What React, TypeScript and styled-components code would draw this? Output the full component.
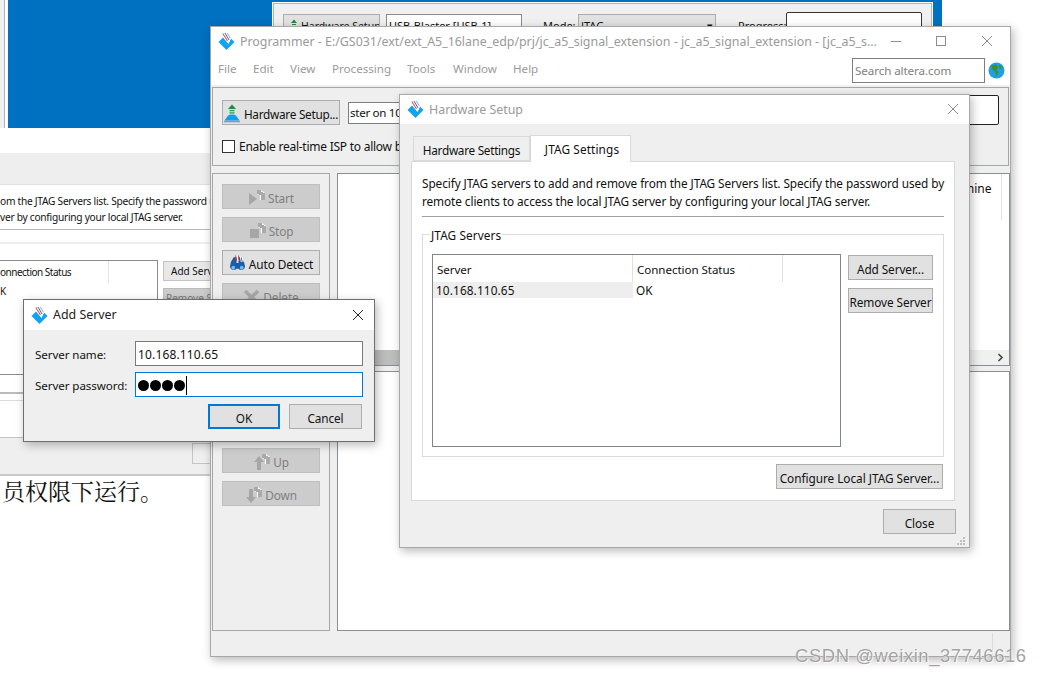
import React from "react";
import styled, { createGlobalStyle } from "styled-components";

const Global = createGlobalStyle`
  html, body { margin: 0; padding: 0; background: #fff; }
  * { box-sizing: border-box; }
  body { font-family: "Noto Sans", "Open Sans", sans-serif; font-size: 12px; color: #111; }
`;

const Desktop = styled.div`
  position: relative;
  width: 1041px;
  height: 675px;
  overflow: hidden;
  background: #fff;
`;

/* desktop canvas: every window sits at its own place */
const BlueWall = styled.div`
  position: absolute;
  left: 8px;
  top: 0;
  width: 934px;
  height: 128px;
  background: #0070c0;
`;
const LeftStrip = styled.div`
  position: absolute;
  left: 0;
  top: 0;
  width: 8px;
  height: 128px;
  background: #f0f0f0;
  border-right: 3px solid #fff;
  &::after {
    content: "";
    position: absolute;
    left: 4px;
    top: 0;
    width: 1px;
    height: 128px;
    background: #b0b0b0;
  }
`;
const BackWindow = styled.div`
  position: absolute;
  left: 273px;
  top: 3px;
  width: 659px;
  height: 60px;
  background: #f0f0f0;
  border: 1px solid #b4b4b4;
  display: flex;
  align-items: flex-start;
  padding: 10px 9px;
  gap: 6px;
  outline: 1px solid #fff;
`;
const BackButton = styled.div`
  width: 97px;
  height: 26px;
  background: #e1e1e1;
  border: 1px solid #adadad;
  display: flex;
  padding: 4px 0 0 3px;
  font-size: 10.5px;
  white-space: nowrap;
  overflow: hidden;
`;
const BackField = styled.div<{ $w: number; $ml?: number }>`
  width: ${(p) => p.$w}px;
  margin-left: ${(p) => p.$ml ?? 0}px;
  height: 26px;
  background: #fff;
  border: 1px solid #8a8a8a;
  font-size: 11px;
  padding: 3px 2px;
  white-space: nowrap;
  display: flex;
  justify-content: space-between;
`;
const BackLabel = styled.div<{ $w: number; $ml: number }>`
  width: ${(p) => p.$w}px;
  margin-left: ${(p) => p.$ml}px;
  font-size: 11px;
  padding-top: 4px;
  white-space: nowrap;
`;
const BackSelect = styled(BackField)`
  background: #e1e1e1;
  border-color: #adadad;
`;
const BackBox = styled.div`
  width: 136px;
  height: 30px;
  margin-top: -2px;
  background: #fff;
  border: 1px solid #333;
  border-radius: 2px;
`;

const StaleWindow = styled.div`
  position: absolute;
  left: 0;
  top: 128px;
  width: 212px;
  height: 547px;
  display: flex;
  flex-direction: column;
  background: #fff;
`;
const StaleTitle = styled.div`
  height: 25px;
  flex: none;
  background: #fff;
`;
const StaleBand = styled.div`
  height: 31px;
  flex: none;
  background: #eeeeee;
`;
const StaleTop = styled.div`
  height: 46px;
  flex: none;
  padding-top: 8px;
  background: #fff;
  overflow: hidden;
  white-space: nowrap;
  line-height: 16px;
  font-size: 10.2px;
  letter-spacing: -0.27px;
  border-top: 1px solid #e0e0e0;
  border-bottom: 1px solid #b8b8b8;
`;
const StaleGap = styled.div`
  height: 14px;
  flex: none;
  background: #fff;
  border-bottom: 2px solid #eee;
`;
const StaleList = styled.div`
  flex: none;
  height: 148px;
  display: flex;
  gap: 5px;
  padding-top: 16px;
  background: #fff;
`;
const StaleTable = styled.div`
  width: 158px;
  height: 115px;
  flex: none;
  background: #fff;
  border: 1px solid #8a8a8a;
  border-left: 0;
  display: grid;
  grid-template-columns: 109px 1fr;
  grid-template-rows: 22px 16px;
  font-size: 10px;
  letter-spacing: -0.5px;
  line-height: 16px;
`;
const StaleHead = styled.div`
  border-right: 1px solid #e3e3e3;
  line-height: 23px;
  white-space: nowrap;
`;
const StaleButtons = styled.div`
  display: flex;
  flex-direction: column;
  gap: 7px;
  margin-top: 1px;
`;
const StaleButton = styled.div<{ $off?: boolean }>`
  width: 60px;
  height: 20px;
  overflow: hidden;
  white-space: nowrap;
  padding-left: ${(p) => (p.$off ? 2 : 7)}px;
  font-size: 10px;
  line-height: 18px;
  background: ${(p) => (p.$off ? "#ccc" : "#e8e8e8")};
  border: 1px solid ${(p) => (p.$off ? "#bbb" : "#c4c4c4")};
  color: ${(p) => (p.$off ? "#777" : "#111")};
`;
const StaleLines = styled.div`
  flex: none;
  height: 46px;
  background: #fff;
  border-top: 2px solid #bbb;
  border-bottom: 1px solid #c4c4c4;
  &::before {
    content: "";
    display: block;
    height: 6px;
    border-bottom: 1px solid #ddd;
  }
`;
const StaleFoot = styled.div`
  flex: none;
  height: 38px;
  background: #efefef;
  border-bottom: 2px solid #c8c8c8;
  display: flex;
  justify-content: flex-end;
  padding-top: 5px;
`;
const StaleFootBtn = styled.div`
  width: 20px;
  height: 21px;
  background: #efefef;
  border: 1px solid #c4c4c4;
`;
const Chinese = styled.div`
  font-family: "Noto Serif CJK SC", "Noto Sans CJK SC", serif;
  font-size: 23px;
  line-height: 30px;
  padding-left: 2px;
  color: #111;
  white-space: nowrap;
`;

const Win = styled.div<{ $x: number; $y: number; $w: number; $h: number; $active?: boolean }>`
  position: absolute;
  left: ${(p) => p.$x}px;
  top: ${(p) => p.$y}px;
  width: ${(p) => p.$w}px;
  height: ${(p) => p.$h}px;
  display: flex;
  flex-direction: column;
  background: #efefef;
  border: 1px solid ${(p) => (p.$active ? "#6e6e6e" : "#a8a8a8")};
  box-shadow: 2px 3px 9px rgba(0, 0, 0, 0.28);
`;
const TitleBar = styled.div<{ $h: number; $active?: boolean }>`
  height: ${(p) => p.$h}px;
  flex: none;
  background: #fff;
  display: flex;
  align-items: center;
  gap: 5px;
  padding: 0 0 1px 7px;
  font-size: 12.4px;
  color: ${(p) => (p.$active ? "#222" : "#9a9a9a")};
  white-space: nowrap;
`;
const TitleText = styled.span`
  flex: 1;
  min-width: 0;
`;
const CaptionBtn = styled.svg<{ $mr: number }>`
  width: 12px;
  height: 12px;
  margin-right: ${(p) => p.$mr}px;
  flex: none;
`;

const MenuBar = styled.div`
  height: 29px;
  flex: none;
  background: #fff;
  display: flex;
  align-items: center;
  padding-left: 7px;
`;
const MenuItem = styled.span<{ $w: number }>`
  width: ${(p) => p.$w}px;
  padding-bottom: 5px;
  font-size: 11.6px;
  color: #9a9a9a;
`;
const SearchField = styled.div`
  margin-left: auto;
  width: 133px;
  height: 25px;
  background: #fff;
  border: 1px solid #7e7e7e;
  color: #808080;
  font-size: 11.6px;
  line-height: 23px;
  padding-left: 2px;
  letter-spacing: -0.08px;
`;
const Globe = styled.svg`
  width: 17px;
  height: 17px;
  margin: 0 5px 0 3px;
`;

const Panel = styled.div`
  border: 1px solid #a6a6a6;
  background: #efefef;
`;
const ToolPanel = styled(Panel)`
  margin: 2px 1px 0 1px;
  height: 79px;
  padding: 12px 9px 0 9px;
  flex: none;
`;
const ToolRow = styled.div`
  display: flex;
  align-items: center;
  height: 25px;
`;
const CheckRow = styled.div`
  display: flex;
  align-items: center;
  gap: 4px;
  margin-top: 11px;
  height: 20px;
  font-size: 12px;
  letter-spacing: -0.25px;
  white-space: nowrap;
`;
const CheckBox = styled.span`
  width: 13px;
  height: 13px;
  flex: none;
  border: 1px solid #333;
  background: #fff;
`;
const Btn = styled.button<{ $w?: number; $off?: boolean; $primary?: boolean; $ls?: number }>`
  width: ${(p) => (p.$w ? `${p.$w}px` : "auto")};
  height: 25px;
  flex: none;
  padding: 2px 0 0 0;
  display: flex;
  align-items: center;
  justify-content: center;
  gap: 3px;
  font-family: inherit;
  font-size: 11.8px;
  letter-spacing: ${(p) => p.$ls ?? -0.1}px;
  white-space: nowrap;
  background: ${(p) => (p.$off ? "#cccccc" : "#e1e1e1")};
  border: ${(p) => (p.$primary ? "2px solid #0078d7" : p.$off ? "1px solid #bfbfbf" : "1px solid #adadad")};
  color: ${(p) => (p.$off ? "#808080" : "#111")};
`;
const DeviceField = styled.div`
  margin-left: 8px;
  height: 22px;
  width: 100px;
  padding-left: 1px;
  background: #fff;
  border: 1px solid #7e7e7e;
  font-size: 11.6px;
  letter-spacing: -0.3px;
  line-height: 20px;
  white-space: nowrap;
  overflow: hidden;
`;
const ProgressBox = styled.div`
  margin-left: auto;
  width: 214px;
  height: 30px;
  margin-top: -6px;
  flex: none;
  background: #fff;
  border: 1px solid #222;
  border-radius: 2px;
`;

const Columns = styled.div`
  flex: 1;
  min-height: 0;
  display: flex;
  gap: 7px;
  margin: 7px 0 0 1px;
`;
const SidePanel = styled(Panel)`
  width: 118px;
  flex: none;
  padding: 10px 9px;
  display: flex;
  flex-direction: column;
  gap: 8px;
`;
const SideSpacer = styled.div`
  height: 124px;
  flex: none;
`;
const Stack = styled.div`
  flex: 1;
  min-width: 0;
  display: flex;
  flex-direction: column;
  gap: 5px;
`;
const DeviceTable = styled.div`
  height: 193px;
  flex: none;
  background: #fff;
  border: 1px solid #8a8f96;
  display: flex;
  flex-direction: column;
`;
const DeviceHead = styled.div`
  height: 46px;
  flex: none;
  display: flex;
  justify-content: flex-end;
`;
const DeviceCol = styled.div`
  width: 39px;
  border-right: 1px solid #e3e3e3;
  margin-right: 7px;
  padding-top: 6px;
  font-size: 12px;
  white-space: nowrap;
`;
const ScrollBar = styled.div`
  margin-top: auto;
  height: 15px;
  background: #f0f0f0;
  display: flex;
  align-items: center;
  justify-content: flex-end;
  padding-right: 5px;
`;
const ScrollThumb = styled.div`
  width: 400px;
  height: 15px;
  background: #bdbdbd;
  margin-right: auto;
`;
const LogArea = styled.div`
  flex: 1;
  background: #fff;
  border: 1px solid #8a8f96;
`;
const StatusBar = styled.div`
  height: 25px;
  flex: none;
  display: flex;
  justify-content: flex-end;
`;
const StatusCell = styled.div`
  width: 18px;
  height: 21px;
  margin-top: 2px;
  border-left: 1px solid #dcdcdc;
`;

/* Hardware Setup dialog */
const TabStrip = styled.div`
  display: flex;
  align-items: flex-end;
  padding: 10px 0 0 13px;
  height: 37px;
  flex: none;
`;
const Tab = styled.div<{ $on?: boolean }>`
  height: ${(p) => (p.$on ? 27 : 25)}px;
  width: ${(p) => (p.$on ? 101 : 117)}px;
  margin-bottom: ${(p) => (p.$on ? -1 : 0)}px;
  background: ${(p) => (p.$on ? "#fff" : "#efefef")};
  border: 1px solid #d9d9d9;
  border-bottom: ${(p) => (p.$on ? "0" : "1px solid #d9d9d9")};
  position: relative;
  z-index: ${(p) => (p.$on ? 1 : 0)};
  display: flex;
  align-items: center;
  justify-content: center;
  font-size: 11.8px;
  letter-spacing: ${(p) => (p.$on ? 0.12 : -0.3)}px;
  padding: ${(p) => (p.$on ? "0 0 0 3px" : "3px 0 0 0")};
`;
const TabPanel = styled.div`
  margin: 0 14px 0 11px;
  height: 340px;
  flex: none;
  background: #fff;
  border: 1px solid #d9d9d9;
  padding: 12px 10px 0 10px;
  display: flex;
  flex-direction: column;
`;
const Intro = styled.div`
  font-size: 11.8px;
  line-height: 18px;
  letter-spacing: -0.083px;
  white-space: nowrap;
  height: 43px;
  flex: none;
  border-bottom: 1px solid #a0a0a0;
`;
const Group = styled.div`
  position: relative;
  margin-top: 17px;
  height: 223px;
  flex: none;
  border: 1px solid #dcdcdc;
  padding: 19px 10px 9px 9px;
  display: flex;
  gap: 7px;
`;
const Legend = styled.div`
  position: absolute;
  left: 7px;
  top: -7px;
  padding: 0 1px;
  background: #fff;
  font-size: 11.8px;
  line-height: 14px;
  letter-spacing: 0.1px;
`;
const ServerTable = styled.div`
  width: 409px;
  flex: none;
  border: 1px solid #80858c;
  display: flex;
  flex-direction: column;
`;
const ServerHead = styled.div`
  display: grid;
  grid-template-columns: 200px 150px;
  height: 27px;
  flex: none;
`;
const HeadCell = styled.div`
  border-right: 1px solid #e0e0e0;
  padding: 7px 0 0 4px;
  font-size: 11.6px;
  line-height: 16px;
  letter-spacing: -0.06px;
`;
const ServerRow = styled.div`
  display: grid;
  grid-template-columns: 200px 150px;
  height: 14px;
  flex: none;
  font-size: 11.8px;
  line-height: 16px;
  letter-spacing: 0.12px;
`;
const RowCell = styled.div<{ $sel?: boolean }>`
  padding-left: 3px;
  background: ${(p) => (p.$sel ? "#eeeeee" : "transparent")};
`;
const SideButtons = styled.div`
  display: flex;
  flex-direction: column;
  gap: 8px;
  padding-top: 1px;
`;
const FootRight = styled.div<{ $pt: number; $pr: number }>`
  display: flex;
  justify-content: flex-end;
  padding: ${(p) => p.$pt}px ${(p) => p.$pr}px 0 0;
  flex: none;
`;
const Grip = styled.svg`
  position: absolute;
  right: 3px;
  bottom: 2px;
  width: 9px;
  height: 9px;
`;

/* Add Server dialog */
const AddForm = styled.div`
  padding: 11px 12px 0 11px;
  display: grid;
  grid-template-columns: 100px 228px;
  row-gap: 6px;
  align-items: center;
  font-size: 11.6px;
  letter-spacing: -0.08px;
`;
const FieldLabel = styled.span`
  padding-top: 2px;
`;
const Input = styled.div<{ $focus?: boolean }>`
  height: 25px;
  background: #fff;
  border: 1px solid ${(p) => (p.$focus ? "#0078d7" : "#7a7a7a")};
  padding: 1px 0 0 2px;
  display: flex;
  align-items: center;
  font-size: 12px;
  letter-spacing: 0.15px;
`;
const Dots = styled.span`
  display: flex;
  gap: 1px;
  align-items: center;
`;
const Dot = styled.i`
  width: 11px;
  height: 11px;
  border-radius: 50%;
  background: #000;
  display: block;
`;
const Caret = styled.i`
  width: 1px;
  height: 19px;
  background: #000;
  margin-left: 1px;
  display: block;
`;
const AddButtons = styled.div`
  display: flex;
  justify-content: flex-end;
  gap: 9px;
  padding: 7px 12px 0 0;
`;
const Watermark = styled.div`
  position: absolute;
  left: 795px;
  top: 645px;
  font-family: "Liberation Sans", Arial, sans-serif;
  font-size: 18.4px;
  line-height: 22px;
  letter-spacing: 0.6px;
  color: rgba(150, 150, 150, 0.9);
  text-shadow: 0 0 1px #fff, 1px 1px 0 rgba(255, 255, 255, 0.8);
  white-space: nowrap;
`;

const LogoSvg = styled.svg`
  width: 17px;
  height: 18px;
  flex: none;
`;
const Logo = () => (
  <LogoSvg viewBox="0 0 17 18">
    <path d="M0.5 10 L5 5.5 L10.5 12 L13 6.5 L16.5 10 L8.5 18 Z" fill="#10a3f0" />
    <path d="M4 1.5 H10 L13 6.5 L10.5 11.5 Z" fill="#fff" />
    <path d="M4.8 1.5 L9.5 9" stroke="#e2554a" strokeWidth="1.1" />
    <path d="M7 1 L11 8" stroke="#3b62b8" strokeWidth="1" />
    <path d="M9.3 1 L12.4 6.2" stroke="#8fa6dc" strokeWidth="1" />
  </LogoSvg>
);

const Close = ({ color, mr }: { color: string; mr: number }) => (
  <CaptionBtn $mr={mr} viewBox="0 0 12 12">
    <path d="M1 1 L11 11 M11 1 L1 11" stroke={color} strokeWidth="1" fill="none" />
  </CaptionBtn>
);

const HardwareSvg = styled.svg`
  width: 16px;
  height: 19px;
  margin-right: 1px;
  flex: none;
`;
const HardwareIcon = () => (
  <HardwareSvg viewBox="0 0 16 19">
    <path d="M8 0.5 L12 5 H4 Z" fill="#1f8a3d" />
    <path d="M5.5 6 H10.5 V7.3 H5.5 Z M5.5 8.3 H10.5 V9.5 H5.5 Z" fill="#2f9a4d" />
    <path d="M3 13 C4 11 5.5 10.5 8 10.5 C10.5 10.5 12 11 13 13 L15.5 16.5 H0.5 Z" fill="#11a0ee" />
    <path d="M0.5 17.5 H15.5" stroke="#14509e" strokeWidth="1.6" strokeDasharray="1 1" />
  </HardwareSvg>
);

const MiniSvg = styled.svg`
  width: 14px;
  height: 20px;
  flex: none;
`;
const MiniArrow = () => (
  <MiniSvg viewBox="0 0 14 20">
    <path d="M7 0.5 L10 4 H4 Z M5 5 H9 V6 H5 Z M5 7 H9 V8 H5 Z" fill="#1f8a3d" />
    <path d="M1 15 L3 10 H11 L13 15 Z" fill="#11a0ee" />
  </MiniSvg>
);

const Stripes = ({ x, y }: { x: number; y: number }) => (
  <g transform={`translate(${x} ${y})`}>
    <path d="M0 0 H4 L8 3 V10 H3 V5 L0 4 Z" fill="#fff" />
    <path d="M1 0 V4 M3 0 V5 M5 2 V10 M7 3 V10" stroke="#555" strokeWidth="1" />
  </g>
);

const DisabledSvg = styled.svg`
  width: 20px;
  height: 18px;
  margin-right: -3px;
  flex: none;
`;
const DisabledIcon = ({ kind }: { kind: "start" | "stop" | "delete" | "up" | "down" }) => (
  <DisabledSvg viewBox="0 0 20 18">
    {kind === "start" && <path d="M1 4 L9 10 L1 16 Z" fill="#a6a6a6" />}
    {kind === "stop" && <rect x="1" y="7" width="9" height="9" fill="#a6a6a6" />}
    {kind === "delete" && <path d="M2 3 L15 15 M15 3 L2 15" stroke="#a6a6a6" strokeWidth="3.6" />}
    {kind === "up" && <path d="M6 3 L11 9 H8 V17 H4 V9 H1 Z" fill="#a6a6a6" />}
    {kind === "down" && <path d="M6 17 L11 11 H8 V3 H4 V11 H1 Z" fill="#a6a6a6" />}
    {kind !== "delete" && <Stripes x={9} y={1} />}
  </DisabledSvg>
);

const Binoculars = () => (
  <svg width="17" height="19" viewBox="0 0 18 19">
    <path d="M2 8 L5 3 H8 V9 H10 V3 H13 L16 8 L17 13 A4 4 0 0 1 10 15 H8 A4 4 0 0 1 1 13 Z" fill="#1a5ea8" />
    <circle cx="4.5" cy="14" r="2" fill="#7ab8e8" />
    <circle cx="13.5" cy="14" r="2" fill="#7ab8e8" />
    <path d="M7 1 L8 7 M10 1 L11 7" stroke="#d9342b" strokeWidth="1" />
    <path d="M8.5 1 L9.5 7 M12 2 L13 8 M14 3 L15 8" stroke="#fff" strokeWidth="1" />
  </svg>
);

const SideBtn = ({ kind, label }: { kind: "start" | "stop" | "delete" | "up" | "down"; label: string }) => (
  <Btn $w={98} $off>
    <DisabledIcon kind={kind} />
    {label}
  </Btn>
);

export default function App() {
  return (
    <Desktop>
      <Global />
      <LeftStrip />
      <BlueWall />
      <BackWindow>
        <BackButton>
          <MiniArrow />
          Hardware Setup...
        </BackButton>
        <BackField $w={136}>USB-Blaster [USB-1]</BackField>
        <BackLabel $w={29} $ml={15}>Mode:</BackLabel>
        <BackSelect $w={138}>
          JTAG<span>▾</span>
        </BackSelect>
        <BackLabel $w={42} $ml={16}>Progress:</BackLabel>
        <BackBox />
      </BackWindow>

      <StaleWindow>
        <StaleTitle />
        <StaleBand />
        <StaleTop>
          om the JTAG Servers list. Specify the password u
          <br />
          ver by configuring your local JTAG server.
        </StaleTop>
        <StaleGap />
        <StaleList>
          <StaleTable>
            <StaleHead>onnection Status</StaleHead>
            <div />
            <div>K</div>
          </StaleTable>
          <StaleButtons>
            <StaleButton>Add Server...</StaleButton>
            <StaleButton $off>Remove Server</StaleButton>
          </StaleButtons>
        </StaleList>
        <StaleLines />
        <StaleFoot>
          <StaleFootBtn />
        </StaleFoot>
        <Chinese>员权限下运行。</Chinese>
      </StaleWindow>

      <Win $x={210} $y={26} $w={801} $h={631}>
        <TitleBar $h={29}>
          <Logo />
          <TitleText>
            Programmer - E:/GS031/ext/ext_A5_16lane_edp/prj/jc_a5_signal_extension - jc_a5_signal_extension - [jc_a5_s...
          </TitleText>
          <CaptionBtn $mr={28} viewBox="0 0 12 12">
            <path d="M1 6.5 H11" stroke="#8c8c8c" fill="none" />
          </CaptionBtn>
          <CaptionBtn $mr={29} viewBox="0 0 12 12">
            <rect x="1.5" y="1.5" width="9" height="9" stroke="#8c8c8c" fill="none" />
          </CaptionBtn>
          <Close color="#8c8c8c" mr={17} />
        </TitleBar>
        <MenuBar>
          <MenuItem $w={35}>File</MenuItem>
          <MenuItem $w={37}>Edit</MenuItem>
          <MenuItem $w={42}>View</MenuItem>
          <MenuItem $w={75}>Processing</MenuItem>
          <MenuItem $w={46}>Tools</MenuItem>
          <MenuItem $w={60}>Window</MenuItem>
          <MenuItem $w={30}>Help</MenuItem>
          <SearchField>Search altera.com</SearchField>
          <Globe viewBox="0 0 17 17">
            <circle cx="8.5" cy="8.5" r="8" fill="#1ea0e6" />
            <path d="M3 3.5 L8 2.5 L10 5 L8.5 8 L10.5 10 L8.5 15 L7.5 10.5 L4.5 7.5 Z" fill="#3f8f2f" />
            <path d="M11 3 L14 4 L13 7 L11 6 Z" fill="#3f8f2f" />
          </Globe>
        </MenuBar>
        <ToolPanel>
          <ToolRow>
            <Btn $w={118} $ls={-0.28}>
              <HardwareIcon />
              Hardware Setup...
            </Btn>
            <DeviceField>ster on 10.168.110.65</DeviceField>
            <ProgressBox />
          </ToolRow>
          <CheckRow>
            <CheckBox />
            Enable real-time ISP to allow background programming
          </CheckRow>
        </ToolPanel>
        <Columns>
          <SidePanel>
            <SideBtn kind="start" label="Start" />
            <SideBtn kind="stop" label="Stop" />
            <Btn $w={98}>
              <Binoculars />
              Auto Detect
            </Btn>
            <SideBtn kind="delete" label="Delete" />
            <SideSpacer />
            <SideBtn kind="up" label="Up" />
            <SideBtn kind="down" label="Down" />
          </SidePanel>
          <Stack>
            <DeviceTable>
              <DeviceHead>
                <DeviceCol>mine</DeviceCol>
              </DeviceHead>
              <ScrollBar>
                <ScrollThumb />
                <svg width="7" height="9" viewBox="0 0 7 9">
                  <path d="M1.5 1 L5 4.5 L1.5 8" stroke="#444" strokeWidth="1.6" fill="none" />
                </svg>
              </ScrollBar>
            </DeviceTable>
            <LogArea />
          </Stack>
        </Columns>
        <StatusBar>
          <StatusCell />
        </StatusBar>
      </Win>

      <Win $x={399} $y={94} $w={571} $h={454}>
        <TitleBar $h={29}>
          <Logo />
          <TitleText>Hardware Setup</TitleText>
          <Close color="#8c8c8c" mr={10} />
        </TitleBar>
        <TabStrip>
          <Tab>Hardware Settings</Tab>
          <Tab $on>JTAG Settings</Tab>
        </TabStrip>
        <TabPanel>
          <Intro>
            Specify JTAG servers to add and remove from the JTAG Servers list. Specify the password used by
            <br />
            remote clients to access the local JTAG server by configuring your local JTAG server.
          </Intro>
          <Group>
            <Legend>JTAG Servers</Legend>
            <ServerTable>
              <ServerHead>
                <HeadCell>Server</HeadCell>
                <HeadCell>Connection Status</HeadCell>
              </ServerHead>
              <ServerRow>
                <RowCell $sel>10.168.110.65</RowCell>
                <RowCell>OK</RowCell>
              </ServerRow>
            </ServerTable>
            <SideButtons>
              <Btn $w={85}>Add Server...</Btn>
              <Btn $w={85}>Remove Server</Btn>
            </SideButtons>
          </Group>
          <FootRight $pt={7} $pr={1}>
            <Btn $w={167} $ls={-0.03}>Configure Local JTAG Server...</Btn>
          </FootRight>
        </TabPanel>
        <FootRight $pt={8} $pr={13}>
          <Btn $w={73}>Close</Btn>
        </FootRight>
        <Grip viewBox="0 0 9 9">
          <path d="M6 1 H8 V3 H6 Z M3 4 H5 V6 H3 Z M6 4 H8 V6 H6 Z M0 7 H2 V9 H0 Z M3 7 H5 V9 H3 Z M6 7 H8 V9 H6 Z" fill="#bdbdbd" />
        </Grip>
      </Win>

      <Win $x={23} $y={299} $w={352} $h={143} $active>
        <TitleBar $h={30} $active>
          <Logo />
          <TitleText>Add Server</TitleText>
          <Close color="#222" mr={10} />
        </TitleBar>
        <AddForm>
          <FieldLabel>Server name:</FieldLabel>
          <Input>10.168.110.65</Input>
          <FieldLabel>Server password:</FieldLabel>
          <Input $focus>
            <Dots>
              <Dot />
              <Dot />
              <Dot />
              <Dot />
            </Dots>
            <Caret />
          </Input>
        </AddForm>
        <AddButtons>
          <Btn $w={72} $primary>OK</Btn>
          <Btn $w={73}>Cancel</Btn>
        </AddButtons>
      </Win>

      <Watermark>CSDN @weixin_37746616</Watermark>
    </Desktop>
  );
}
